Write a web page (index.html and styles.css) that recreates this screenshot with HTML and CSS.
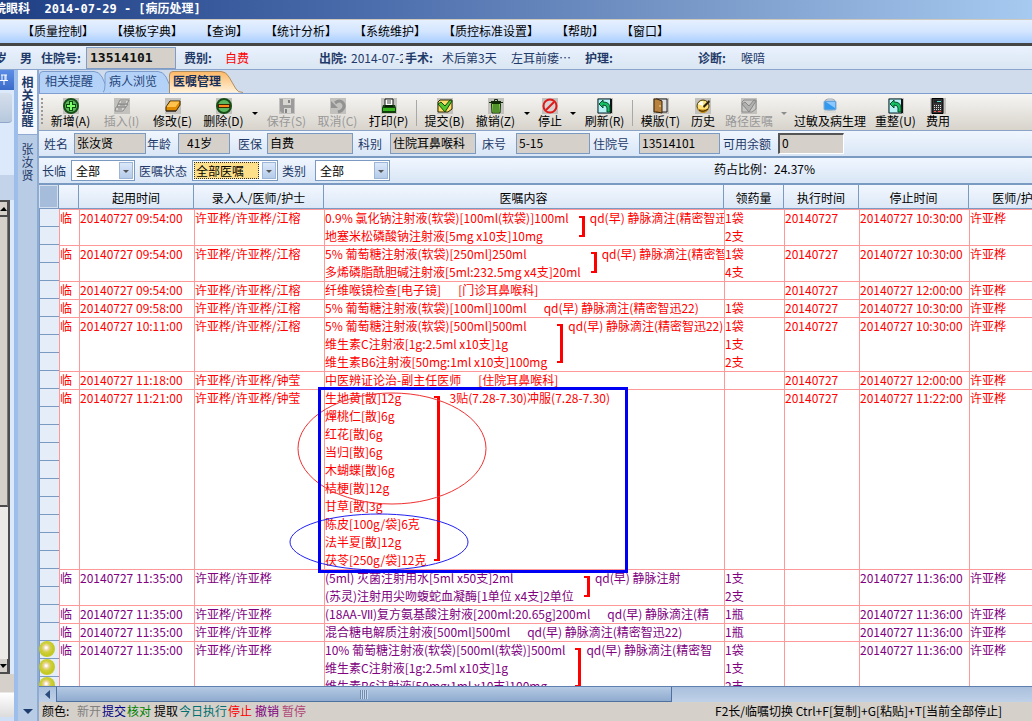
FILE: index.html
```html
<!DOCTYPE html>
<html lang="zh-CN">
<head>
    <meta charset="UTF-8">
    <meta name="viewport" content="width=device-width, initial-scale=1.0">
    <title>病历处理</title>
    <link rel="stylesheet" href="styles.css">
</head>
<body>
    <header class="title-bar">院眼科&nbsp; 2014-07-29 - [病历处理]</header>

    <nav class="menu-bar">
        <a href="#">【质量控制】</a>
        <a href="#">【模板字典】</a>
        <a href="#">【查询】</a>
        <a href="#">【统计分析】</a>
        <a href="#">【系统维护】</a>
        <a href="#">【质控标准设置】</a>
        <a href="#">【帮助】</a>
        <a href="#">【窗口】</a>
    </nav>

    <div class="patient-bar">
        <b class="age">岁</b>
        <b class="sex">男</b>
        <label class="lbl-no" for="patient-no">住院号:</label>
        <input class="patient-no" id="patient-no" type="text" value="13514101" readonly>
        <b class="lbl-fee">费别:</b><span class="fee">自费</span>
        <b class="lbl-out">出院:</b><span class="out">2014-07-29</span>
        <b class="lbl-op">手术:</b><span class="op">术后第3天</span><span class="op-more">左耳前瘘⋯</span>
        <b class="lbl-care">护理:</b>
        <b class="lbl-diag">诊断:</b><span>喉喑</span>
    </div>

    <div class="workspace">
        <aside class="nav-pane">
            <div class="nav-head">
                <svg width="8" height="12" viewBox="0 0 8 12"><path d="M1 1h6M2 1v5M5 1v5M6 1v5M0 6.5h8M4 7v4" stroke="#fff" fill="none"/></svg>
            </div>
            <div class="nav-item"></div>
            <div class="nav-gap"></div>
            <div class="nav-scroll">
                <button class="nav-arrow" aria-label="上"><svg width="7" height="4"><path d="M0 4L4 0l3 4z"/></svg></button>
                <div class="nav-thumb"></div>
                <div class="nav-track"></div>
                <button class="nav-arrow" aria-label="下"><svg width="7" height="4"><path d="M0 0h7L3 4z"/></svg></button>
            </div>
            <div class="nav-foot"></div>
        </aside>

        <div class="side-tabs">
            <button class="side-tab active">相关提醒</button>
            <button class="side-tab">张汝贤</button>
            <svg class="side-more" width="10" height="6"><path d="M0 0h10L5 5z" fill="#1e3c6e"/></svg>
        </div>

        <main class="main">
            <div class="tabs">
                <button class="tab tab-first">
                    <svg viewBox="0 0 72 22" preserveAspectRatio="none"><path d="M.5 22V4Q.5.500 4 .5H55Q60 .5 63 6L68 17Q70 21.500 72 21.500" /></svg>
                    <span>相关提醒</span>
                </button>
                <button class="tab tab-second">
                    <svg viewBox="0 0 72 22" preserveAspectRatio="none"><path d="M0 21.500Q2 20 2 14V4Q2 .5 6 .5H55Q60 .5 63 6L68 17Q70 21.500 72 21.500" /></svg>
                    <span>病人浏览</span>
                </button>
                <button class="tab active">
                    <svg viewBox="0 0 74 22" preserveAspectRatio="none">
                        <defs><linearGradient id="orange" x2="0" y2="1"><stop offset="0" stop-color="#ffb865"/><stop offset="1" stop-color="#fff3df"/></linearGradient></defs>
                        <path d="M.5 22V4Q.5.500 4 .5H52Q57 .5 60 6L67 18Q69 21.500 74 21.500"/>
                    </svg>
                    <span>医嘱管理</span>
                </button>
            </div>

            <div class="toolbar">
                <i class="grip"></i>
                <button class="tool">
                    <svg viewBox="0 0 16 16"><circle cx="8" cy="8" r="7" fill="#5cb85c" stroke="#174d17" stroke-width="2"/><path d="M8 3v10M3 8h10" stroke="#0b4a0b" stroke-width="4"/><path d="M8 4v8M4 8h8" stroke="#7dff6a" stroke-width="2"/></svg>
                    新增(A)
                </button>
                <button class="tool" disabled>
                    <svg viewBox="0 0 16 16"><path d="M6 2h9l-2 4H4zM4 6h10l-2 3H3zM2 9h10l-3 4H1z" fill="#d6d4cf" stroke="#8a8a8a"/><path d="M7 4h5M6 7h5M4 11h4" stroke="#858585"/></svg>
                    插入(I)
                </button>
                <button class="tool">
                    <svg viewBox="0 0 16 16"><path d="M5 3h10v4l-4 6H1V9z" fill="#e08a00" stroke="#3d2600"/><path d="M5.500 3.500h9L10.500 9h-9z" fill="#ffc34d"/><path d="M1 13h10" stroke="#222"/></svg>
                    修改(E)
                </button>
                <button class="tool">
                    <svg viewBox="0 0 16 16"><circle cx="8" cy="8" r="7" fill="#5db55d" stroke="#174d17" stroke-width="2"/><path d="M2 6h12v4H2z" fill="#3b2500"/><path d="M3 7h10v2H3z" fill="#ff8a1c"/></svg>
                    删除(D)
                </button>
                <button class="drop" aria-label="删除选项"></button>
                <button class="tool" disabled>
                    <svg viewBox="0 0 16 16"><path d="M1 1h14v14H3l-2-2z" fill="#9b9b9b"/><path d="M4 1h8v6H4zM5 10h7v5H5z" fill="#d8d6d0"/><path d="M9 2h2v3H9zM6 11h2v4H6z" fill="#858585"/></svg>
                    保存(S)
                </button>
                <button class="tool" disabled>
                    <svg viewBox="0 0 16 16"><path d="M5 5q5-4 8 0t-2 8l-3 1" fill="none" stroke="#929292" stroke-width="3"/><path d="M1 3v7h7z" fill="#929292"/></svg>
                    取消(C)
                </button>
                <button class="tool">
                    <svg viewBox="0 0 16 16"><path d="M4 1h8v7H4z" fill="#fff" stroke="#111"/><path d="M6 3h4M6 5h4" stroke="#444"/><path d="M2 7h12l1 3v5H1v-5z" fill="#123d0c"/><path d="M2 10h12v3H2z" fill="#37b41e"/><path d="M4 8h8" stroke="#000"/></svg>
                    打印(P)
                </button>
                <i class="sep"></i>
                <button class="tool">
                    <svg viewBox="0 0 16 16"><path d="M3 2h12v9l-4 3H1V4z" fill="#ffdc68" stroke="#282400"/><path d="M1 6l3-2 4 4 5-6 2 1-7 11z" fill="#55c630" stroke="#124a0a"/></svg>
                    提交(B)
                </button>
                <button class="tool">
                    <svg viewBox="0 0 16 16"><path d="M3.500 5.500h9L12 15H4z" fill="#8fdc50" stroke="#102d08"/><path d="M1 4.500h14M3 3.500h10M6.500 3V1.500h3V3" stroke="#102d08" fill="none"/><path d="M6 6v8M8 6v8M10 6v8" stroke="#174d0a"/></svg>
                    撤销(Z)
                </button>
                <button class="drop" aria-label="撤销选项"></button>
                <button class="tool narrow">
                    <svg viewBox="0 0 16 16"><circle cx="8" cy="8" r="6.500" fill="#d9d2d2" stroke="#e01818" stroke-width="2"/><path d="M4 12l8-8" stroke="#e01818" stroke-width="2"/></svg>
                    停止
                </button>
                <button class="drop" aria-label="停止选项"></button>
                <button class="tool">
                    <svg viewBox="0 0 16 16"><path d="M1 1h13v14H1z" fill="#b6f2f5" stroke="#08222c"/><path d="M14 1v14" stroke="#111" stroke-width="2"/><path d="M2 6l4-4v2q7 0 7 6v4h-3v-4q0-3-4-3v3z" fill="#14c065" stroke="#054d27"/></svg>
                    刷新(R)
                </button>
                <i class="sep"></i>
                <button class="tool">
                    <svg viewBox="0 0 16 16"><path d="M3 1h11v13H3z" fill="#ddd" stroke="#222"/><path d="M1 1h3l5 2v12l-5-1H1z" fill="#b8813d" stroke="#352008"/><path d="M6 8h2" stroke="#ffe08a"/></svg>
                    模版(T)
                </button>
                <button class="tool narrow">
                    <svg viewBox="0 0 16 16"><circle cx="8" cy="8" r="6" fill="#ffe27a" stroke="#4c3900"/><path d="M3 6q2-3 5-3v5z" fill="#fff"/><path d="M8 8l6-6 1 2-6 6z" fill="#2a2108"/><path d="M2 10q5 3 12 0-2 5-6 5t-6-5z" fill="#c88d10"/><path d="M4 12q4 3 9-1" stroke="#332706" fill="none"/></svg>
                    历史
                </button>
                <button class="tool wide" disabled>
                    <svg viewBox="0 0 16 16"><path d="M3 2h12v9l-4 3H1V4z" fill="#c8c7c3" stroke="#8c8c8c"/><path d="M1 6l3-2 4 4 5-6 2 1-7 11z" fill="#b0b0ae" stroke="#888"/></svg>
                    路径医嘱
                </button>
                <button class="drop off" aria-label="路径选项"></button>
                <button class="tool wider">
                    <svg class="plain" viewBox="0 0 16 16"><rect x="3" y="1" width="10" height="11" rx="3" fill="#dfe3e8" stroke="#a0a8b0"/><rect x="2" y="3" width="12" height="9" rx="1" fill="#3399ee" stroke="#8baccb"/><path d="M4 4l9 6V4z" fill="#8cc8ff"/><path d="M2 14h12" stroke="#d0d0d0"/></svg>
                    过敏及病生理
                </button>
                <button class="tool">
                    <svg viewBox="0 0 16 16"><path d="M1 1h13v14H1z" fill="#b6f2f5" stroke="#08222c"/><path d="M14 1v14" stroke="#111" stroke-width="2"/><path d="M2 6l4-4v2q7 0 7 6v4h-3v-4q0-3-4-3v3z" fill="#14c065" stroke="#054d27"/></svg>
                    重整(U)
                </button>
                <button class="tool narrow">
                    <svg viewBox="0 0 16 16"><path d="M2 .5h11v15H2z" fill="#333" stroke="#000"/><path d="M4 2h7v3H4z" fill="#222"/><path d="M7 3.500h4" stroke="#5fe0d8"/><path d="M4 7.500h8M4 9.500h8M4 11.500h8" stroke="#ddd" stroke-dasharray="1 1"/><path d="M4 13.500h2M8 13.500h3" stroke="#f55"/></svg>
                    费用
                </button>
            </div>

            <form class="info-row">
                <label class="w-name" for="name">姓名</label><input class="in-name" id="name" value="张汝贤" readonly>
                <label class="w-age" for="age">年龄</label><input class="in-age" id="age" value="41岁" readonly>
                <label class="w-ins" for="ins">医保</label><input class="in-ins" id="ins" value="自费" readonly>
                <label class="w-dept" for="dept">科别</label><input class="in-ins" id="dept" value="住院耳鼻喉科" readonly>
                <label class="w-bed" for="bed">床号</label><input class="in-bed" id="bed" value="5-15" readonly>
                <label class="w-no" for="no">住院号</label><input class="in-no" id="no" value="13514101" readonly>
                <label class="w-left" for="left">可用余额</label><input class="in-left" id="left" value="0" readonly>
            </form>

            <form class="filter-row">
                <label class="w-term" for="term">长临</label>
                <span class="combo combo-term"><select id="term"><option>全部</option></select><i></i></span>
                <label class="w-state" for="state">医嘱状态</label>
                <span class="combo combo-state focused"><select id="state"><option>全部医嘱</option></select><i></i></span>
                <label class="w-kind" for="kind">类别</label>
                <span class="combo combo-kind"><select id="kind"><option>全部</option></select><i></i></span>
                <span class="ratio">药占比例：24.37%</span>
            </form>

            <div class="grid">
                <table class="orders">
                    <colgroup>
                        <col class="c-gutter"><col class="c-term"><col class="c-start"><col class="c-staff"><col class="c-content"><col class="c-qty"><col class="c-exec"><col class="c-stop"><col class="c-doctor">
                    </colgroup>
                    <thead>
                        <tr><th class="corner"></th><th></th><th>起用时间</th><th>录入人/医师/护士</th><th>医嘱内容</th><th>领药量</th><th>执行时间</th><th>停止时间</th><th>医师/护士</th></tr>
                    </thead>
                    <tbody>
                        <tr>
                            <td class="gutter"></td><td>临</td><td>20140727 09:54:00</td><td>许亚桦/许亚桦/江榕</td>
                            <td><div class="order">
                                <div>0.9% 氯化钠注射液(软袋)[100ml(软袋)]100ml<br>地塞米松磷酸钠注射液[5mg x10支]10mg</div>
                                <i class="bracket"></i><span>qd(早) 静脉滴注(精密智迅22)</span>
                            </div></td>
                            <td>1袋<br>2支</td><td>20140727</td><td>20140727 10:30:00</td><td>许亚桦</td>
                        </tr>
                        <tr>
                            <td class="gutter"></td><td>临</td><td>20140727 09:54:00</td><td>许亚桦/许亚桦/江榕</td>
                            <td><div class="order">
                                <div>5% 葡萄糖注射液(软袋)[250ml]250ml<br>多烯磷脂酰胆碱注射液[5ml:232.5mg x4支]20ml</div>
                                <i class="bracket"></i><span>qd(早) 静脉滴注(精密智迅22)</span>
                            </div></td>
                            <td>1袋<br>4支</td><td>20140727</td><td>20140727 10:30:00</td><td>许亚桦</td>
                        </tr>
                        <tr>
                            <td class="gutter"></td><td>临</td><td>20140727 09:54:00</td><td>许亚桦/许亚桦/江榕</td>
                            <td><div class="order single"><div>纤维喉镜检查[电子镜]</div><span>[门诊耳鼻喉科]</span></div></td>
                            <td></td><td>20140727</td><td>20140727 12:00:00</td><td>许亚桦</td>
                        </tr>
                        <tr>
                            <td class="gutter"></td><td>临</td><td>20140727 09:58:00</td><td>许亚桦/许亚桦/江榕</td>
                            <td><div class="order single"><div>5% 葡萄糖注射液(软袋)[100ml]100ml</div><span>qd(早) 静脉滴注(精密智迅22)</span></div></td>
                            <td>1袋</td><td>20140727</td><td>20140727 10:30:00</td><td>许亚桦</td>
                        </tr>
                        <tr>
                            <td class="gutter"></td><td>临</td><td>20140727 10:11:00</td><td>许亚桦/许亚桦/江榕</td>
                            <td><div class="order">
                                <div>5% 葡萄糖注射液(软袋)[500ml]500ml<br>维生素C注射液[1g:2.5ml x10支]1g<br>维生素B6注射液[50mg:1ml x10支]100mg</div>
                                <i class="bracket"></i><span>qd(早) 静脉滴注(精密智迅22)</span>
                            </div></td>
                            <td>1袋<br>1支<br>2支</td><td>20140727</td><td>20140727 10:30:00</td><td>许亚桦</td>
                        </tr>
                        <tr>
                            <td class="gutter"></td><td>临</td><td>20140727 11:18:00</td><td>许亚桦/许亚桦/钟莹</td>
                            <td><div class="order single"><div>中医辨证论治-副主任医师</div><span>[住院耳鼻喉科]</span></div></td>
                            <td></td><td>20140727</td><td>20140727 12:00:00</td><td>许亚桦</td>
                        </tr>
                        <tr>
                            <td class="gutter"></td><td>临</td><td>20140727 11:21:00</td><td>许亚桦/许亚桦/钟莹</td>
                            <td class="marked">
                                <div class="order herbs">
                                    <div>生地黄[散]12g<br>燀桃仁[散]6g<br>红花[散]6g<br>当归[散]6g<br>木蝴蝶[散]6g<br>桔梗[散]12g<br>甘草[散]3g<br>陈皮[100g/袋]6克<br>法半夏[散]12g<br>茯苓[250g/袋]12克</div>
                                    <i class="bracket"></i><span>3贴(7.28-7.30)冲服(7.28-7.30)</span>
                                </div>
                                <svg class="marks" width="344" height="190" fill="none">
                                    <ellipse cx="104" cy="63.500" rx="94" ry="55.500" stroke="#f03030"/>
                                    <ellipse cx="91" cy="157" rx="89" ry="28" stroke="#2020f0"/>
                                    <rect x="31.500" y="3.500" width="307" height="183" stroke="#0000f5" stroke-width="3"/>
                                </svg>
                            </td>
                            <td></td><td>20140727</td><td>20140727 11:22:00</td><td>许亚桦</td>
                        </tr>
                        <tr class="revoked">
                            <td class="gutter"></td><td>临</td><td>20140727 11:35:00</td><td>许亚桦/许亚桦</td>
                            <td><div class="order">
                                <div>(5ml) 灭菌注射用水[5ml x50支]2ml<br>(苏灵)注射用尖吻蝮蛇血凝酶[1单位 x4支]2单位</div>
                                <i class="bracket"></i><span>qd(早) 静脉注射</span>
                            </div></td>
                            <td>1支<br>2支</td><td></td><td>20140727 11:36:00</td><td>许亚桦</td>
                        </tr>
                        <tr class="revoked">
                            <td class="gutter"></td><td>临</td><td>20140727 11:35:00</td><td>许亚桦/许亚桦</td>
                            <td><div class="order single"><div>(18AA-Ⅶ)复方氨基酸注射液[200ml:20.65g]200ml</div><span>qd(早) 静脉滴注(精</span></div></td>
                            <td>1瓶</td><td></td><td>20140727 11:36:00</td><td>许亚桦</td>
                        </tr>
                        <tr class="revoked">
                            <td class="gutter"></td><td>临</td><td>20140727 11:35:00</td><td>许亚桦/许亚桦</td>
                            <td><div class="order single"><div>混合糖电解质注射液[500ml]500ml</div><span>qd(早) 静脉滴注(精密智迅22)</span></div></td>
                            <td>1瓶</td><td></td><td>20140727 11:36:00</td><td>许亚桦</td>
                        </tr>
                        <tr class="revoked">
                            <td class="gutter"><i class="ball"></i><i class="ball"></i><i class="ball"></i></td><td>临</td><td>20140727 11:35:00</td><td>许亚桦/许亚桦</td>
                            <td><div class="order">
                                <div>10% 葡萄糖注射液(软袋)[500ml(软袋)]500ml<br>维生素C注射液[1g:2.5ml x10支]1g<br>维生素B6注射液[50mg:1ml x10支]100mg</div>
                                <i class="bracket"></i><span>qd(早) 静脉滴注(精密智</span>
                            </div></td>
                            <td>1袋<br>1支<br>2支</td><td></td><td>20140727 11:36:00</td><td>许亚桦</td>
                        </tr>
                    </tbody>
                </table>
            </div>

            <div class="hscroll">
                <button class="scroll-left" aria-label="向左"><svg width="5" height="9"><path d="M5 0v9L0 4.500z" fill="#2d4c7e"/></svg></button>
                <div class="scroll-thumb"><i></i></div>
            </div>

            <footer class="status">
                <span class="s-label">颜色:</span>
                <span class="s-new">新开</span><span class="s-submit">提交</span><span class="s-check">核对</span>
                <span class="s-fetch">提取</span><span class="s-run">今日执行</span><span class="s-stop">停止</span>
                <span class="s-revoke">撤销</span><span class="s-pause">暂停</span>
                <span class="hint">F2长/临嘱切换 Ctrl+F[复制]+G[粘贴]+T[当前全部停止]</span>
            </footer>
        </main>
    </div>
</body>
</html>
```
FILE: styles.css
```css
* {
    box-sizing: border-box;
}

body {
    margin: 0;
    height: 100vh;
    display: flex;
    flex-direction: column;
    overflow: hidden;
    font: 12px/18px "Noto Sans CJK SC", sans-serif;
    color: #000;
    background: #d0dcec;
    white-space: nowrap;
}

button, input, select {
    font: inherit;
    color: inherit;
    margin: 0;
    padding: 0;
    border: 0;
    border-radius: 0;
    background: none;
}

i {
    display: block;
}

/* title and menu */
.title-bar {
    height: 19px;
    flex: none;
    text-indent: -6px;
    color: #fff;
    font: bold 12px/18px "DejaVu Sans Mono", "Noto Sans CJK SC", monospace;
    background: linear-gradient(90deg, #1f3f85, #4a6cab 35%, #7a9ac9 68%, #a6caf0);
}

.menu-bar {
    height: 27px;
    flex: none;
    display: flex;
    gap: 17px;
    padding: 2px 0 0 22px;
    background: linear-gradient(#e6f0ff, #d3e5ff 50%, #a9ceff);
    border-top: 1px solid #cfc8bd;
    border-bottom: 3px solid #454545;
}

.menu-bar a {
    color: #000;
    text-decoration: none;
}

/* patient bar */
.patient-bar {
    height: 24px;
    flex: none;
    display: flex;
    align-items: center;
    overflow: hidden;
    color: #1f3a68;
    background: linear-gradient(#e9f2fd, #dbe6f4);
    border-bottom: 1px solid #8aa5cd;
}

.patient-bar b,
.patient-bar label {
    font-weight: bold;
    flex: none;
}

.patient-bar span {
    flex: none;
}

.age {
    width: 20px;
    text-indent: -5px;
}

.sex {
    width: 21px;
}

.lbl-no {
    width: 45px;
}

.patient-no {
    width: 90px;
    height: 22px;
    margin-right: 8px;
    padding-left: 3px;
    color: #111;
    background: #d5d1ca;
    border: 1px solid #7f9cc6;
    font: bold 13px/20px "DejaVu Sans Mono", monospace;
}

.lbl-fee {
    width: 41px;
}

.fee {
    width: 94px;
    color: #f00;
}

.lbl-out {
    width: 32px;
}

.out {
    width: 52px;
    margin-right: 2px;
    overflow: hidden;
}

.lbl-op {
    width: 37px;
}

.op {
    width: 69px;
}

.op-more {
    width: 74px;
}

.lbl-care {
    width: 113px;
}

.lbl-diag {
    width: 43px;
}

/* left side */
.workspace {
    flex: 1;
    min-height: 0;
    display: flex;
}

.nav-pane {
    width: 18px;
    flex: none;
    display: flex;
    flex-direction: column;
    background: #dbe9fb;
    border-right: 4px solid #9dbdeb;
}

.nav-head {
    height: 20px;
    display: flex;
    align-items: center;
    background: linear-gradient(#5c8ee6, #3b6bc8);
}

.nav-item {
    height: 30px;
    margin: 3px 2px 0 0;
    background: linear-gradient(#d5dfec, #b7c8dd);
    border-bottom: 1px solid #8fa8ca;
    border-radius: 0 4px 4px 0;
}

.nav-gap {
    height: 77px;
    border-bottom: 25px solid #c3d4ea;
}

.nav-scroll {
    flex: 1;
    width: 10px;
    display: flex;
    flex-direction: column;
    border: solid #4c4c4c;
    border-width: 2px 2px 0 0;
}

.nav-arrow {
    height: 15px;
    display: flex;
    align-items: center;
    background: #d5d1ca;
    border: solid #4c4c4c;
    border-width: 0 1px 2px 0;
}

.nav-thumb {
    height: 290px;
    background: #d5d1ca;
    border-bottom: 2px solid #4c4c4c;
    border-right: 1px solid #777;
}

.nav-track {
    flex: 1;
    background: #eceae6;
}

.nav-foot {
    height: 47px;
    background: linear-gradient(#d5d1ca 18px, #fff 19px, #dcdcdc);
    border-bottom: 4px solid #cfdff5;
}

.side-tabs {
    width: 21px;
    flex: none;
    display: flex;
    flex-direction: column;
    align-items: center;
    background: #b9cce6;
    border-right: 2px solid #8fabd4;
}

.side-tab {
    width: 19px;
    padding: 7px 3px;
    color: #1f3a68;
    white-space: normal;
    line-height: 13px;
    overflow-wrap: anywhere;
}

.side-tab.active {
    background: #f5f9ff;
    border-bottom: 1px solid #8fabd4;
    font-weight: bold;
    padding-top: 5px;
}

.side-more {
    margin: auto 0 6px;
}

/* main column */
.main {
    flex: 1;
    min-width: 0;
    display: flex;
    flex-direction: column;
}

.tabs {
    height: 24px;
    flex: none;
    display: flex;
    align-items: flex-end;
    border-bottom: 1px solid #7f9fd0;
}

.tab {
    position: relative;
    width: 74px;
    height: 22px;
    padding: 0 0 2px 4px;
    text-align: left;
    color: #1f4478;
}

.tab svg {
    position: absolute;
    inset: 0;
    width: 100%;
    height: 100%;
    fill: #b4d2f8;
    stroke: #7b9ccc;
}

.tab span {
    position: relative;
}

.tab-first,
.tab-second {
    width: 72px;
    padding-left: 6px;
    margin-right: -8px;
}

.tab-second {
    margin-right: -6px;
}

.tab.active {
    font-weight: bold;
    color: #16305c;
}

.tab.active svg {
    fill: url(#orange);
    stroke: #b08d60;
}

.toolbar {
    height: 37px;
    flex: none;
    display: flex;
    align-items: flex-start;
    padding: 4px 0 0 2px;
    background: linear-gradient(#f6f5f3, #d8d4cc);
    border-bottom: 1px solid #8aa3c6;
}

.grip {
    width: 2px;
    height: 26px;
    margin-right: 2px;
    background: repeating-linear-gradient(#9a9a9a 0 2px, transparent 2px 4px);
}

.tool {
    width: 51px;
    flex: none;
    display: flex;
    flex-direction: column;
    align-items: center;
    line-height: 14px;
}

.tool svg {
    width: 16px;
    height: 16px;
    background: #c2c1be;
}

.tool svg.plain {
    background: none;
}

.tool:disabled {
    color: #989898;
}

.tool.narrow {
    width: 34px;
}

.tool.wide {
    width: 58px;
}

.tool.wider {
    width: 80px;
}

.drop {
    width: 12px;
    flex: none;
    padding: 14px 3px;
}

.drop::before {
    content: "";
    display: block;
    border: 3px solid transparent;
    border-top-color: #000;
    border-bottom: 0;
}

.drop.off::before {
    border-top-color: #8c8c8c;
}

.sep {
    width: 1px;
    height: 26px;
    margin: 2px 2px 0;
    background: #a8a8a8;
}

.info-row,
.filter-row {
    height: 27px;
    flex: none;
    display: flex;
    align-items: center;
    padding-left: 3px;
    color: #1f3a68;
    background: linear-gradient(#f0f6fe, #d9e6f6);
    border-bottom: 2px solid #7b9ac2;
}

.info-row {
    padding-left: 5px;
}

.info-row label,
.filter-row label {
    flex: none;
}

.info-row input {
    height: 21px;
    padding: 0 2px 3px;
    color: #000;
    background: #d5d1ca;
    border: 1px solid #7b9ac2;
}

.w-name { width: 30px; }
.w-age { width: 32px; padding-left: 1px; }
.w-ins { width: 37px; padding-left: 8px; }
.w-dept { width: 37px; padding-left: 5px; }
.w-bed { width: 40px; padding-left: 6px; }
.w-no { width: 49px; padding-left: 3px; }
.w-left { width: 58px; padding-left: 3px; }

.in-name { width: 72px; }
.in-ins { width: 86px; }
.in-bed { width: 74px; }
.in-no { width: 81px; }

.info-row .in-age {
    width: 52px;
    padding-left: 8px;
}

.info-row .in-left {
    width: 66px;
    border: solid #fff;
    border-width: 2px 1px 1px 2px;
    border-top-color: #555;
    border-left-color: #555;
}

.w-term { width: 29px; }
.w-state { width: 57px; padding-left: 4px; }
.w-kind { width: 37px; padding-left: 4px; }

.combo {
    height: 21px;
    display: flex;
    padding: 1px;
    color: #000;
    background: #fff;
    border: 1px solid #7b9ac2;
}

.combo select {
    flex: 1;
    min-width: 0;
    padding-left: 3px;
    appearance: none;
    outline: 0;
    line-height: 15px;
}

.combo i {
    width: 14px;
    height: 17px;
    padding: 7px 3px;
    background: linear-gradient(#dbe8fa, #b5cbe8);
    border: 1px solid #9db5d6;
}

.combo i::before {
    content: "";
    display: block;
    border: 3px solid transparent;
    border-top-color: #555;
    border-bottom: 0;
}

.combo.focused select {
    padding-left: 1px;
    margin-right: 3px;
    background: #ffe08a;
    border: 1px dotted #333;
}

.combo-term { width: 64px; }
.combo-state { width: 86px; }
.combo-kind { width: 75px; }

.ratio {
    margin-left: 324px;
    padding-bottom: 4px;
    color: #000;
}

/* orders table */
.grid {
    flex: 1;
    min-height: 0;
    overflow: hidden;
    background: #fff;
}

.orders {
    width: 1030px;
    table-layout: fixed;
    border-collapse: separate;
    border-spacing: 0;
    color: #f00;
}

.c-gutter, .c-term { width: 20px; }
.c-start { width: 115px; }
.c-staff { width: 130px; }
.c-content { width: 400px; }
.c-qty { width: 60px; }
.c-exec { width: 75px; }
.c-stop { width: 110px; }
.c-doctor { width: 100px; }

.orders th {
    height: 24px;
    padding: 2px 0 0;
    font-weight: normal;
    color: #000;
    background: linear-gradient(#f2f7fe, #dce8f7);
    border-right: 1px solid #7b9ac2;
    border-bottom: 1px solid #7b9ac2;
}

.orders .corner {
    background: #a5bcda;
    box-shadow: inset 0 0 0 1px #d5e0ee;
}

.orders td {
    padding: 0 0 0 1px;
    vertical-align: top;
    box-shadow: inset 1px 1px 0 #f99;
}

.orders td.gutter {
    padding: 0;
    box-shadow: inset 1px 0 0 #7b9ac2;
    background: repeating-linear-gradient(#e4edf8 0 17px, #7b9ac2 17px 18px);
}

.orders .revoked {
    color: #800080;
}

.ball {
    width: 16px;
    height: 16px;
    margin: 0 0 2px;
    border-radius: 50%;
    background: radial-gradient(circle at 45% 42%, #fff 0 6%, #f0d8b0 18%, #d0d040 36%, #c4c820 60%, #cdd040);
}

.order {
    display: flex;
    overflow: hidden;
}

.order div,
.order span {
    flex: none;
}

.bracket {
    width: 6px;
    flex: none;
    margin: 7px 5px 8px 10px;
    border: solid #f00;
    border-width: 2px 3px 2px 0;
}

.order.single {
    gap: 17px;
}

.herbs .bracket {
    margin-left: 7px;
    margin-right: 10px;
}

/* marker shapes laid over the herb list */
.marked {
    position: relative;
}

.marks {
    position: absolute;
    left: -36px;
    top: -4px;
    z-index: 1;
    pointer-events: none;
}

/* bottom */
.hscroll {
    height: 16px;
    flex: none;
    display: flex;
    background: linear-gradient(#aac0dd, #bfd1e8);
    border-top: 1px solid #5f7fae;
}

.scroll-left {
    width: 17px;
    display: flex;
    align-items: center;
    justify-content: center;
}

.scroll-thumb {
    width: 62%;
    display: flex;
    align-items: center;
    justify-content: center;
    background: linear-gradient(#b5cae4, #8fabcf);
    border: 1px solid #4f719f;
    border-top: 0;
}

.scroll-thumb i {
    width: 8px;
    height: 9px;
    background: repeating-linear-gradient(90deg, #6f8cb3 0 1px, #c8d8ea 1px 2px);
}

.status {
    height: 19px;
    flex: none;
    display: flex;
    gap: 1px;
    padding: 0 30px 0 3px;
    background: #d5d1ca;
}

.s-label { width: 34px; }
.s-new { color: #808080; }
.s-submit { color: #000080; }
.s-check { color: #008000; }
.s-fetch { padding-left: 2px; }
.s-run { color: #007070; }
.s-stop { color: #f00; }
.s-revoke { color: #800080; padding-left: 2px; }
.s-pause { color: #b04878; padding-left: 2px; }

.hint {
    margin-left: auto;
}
```
